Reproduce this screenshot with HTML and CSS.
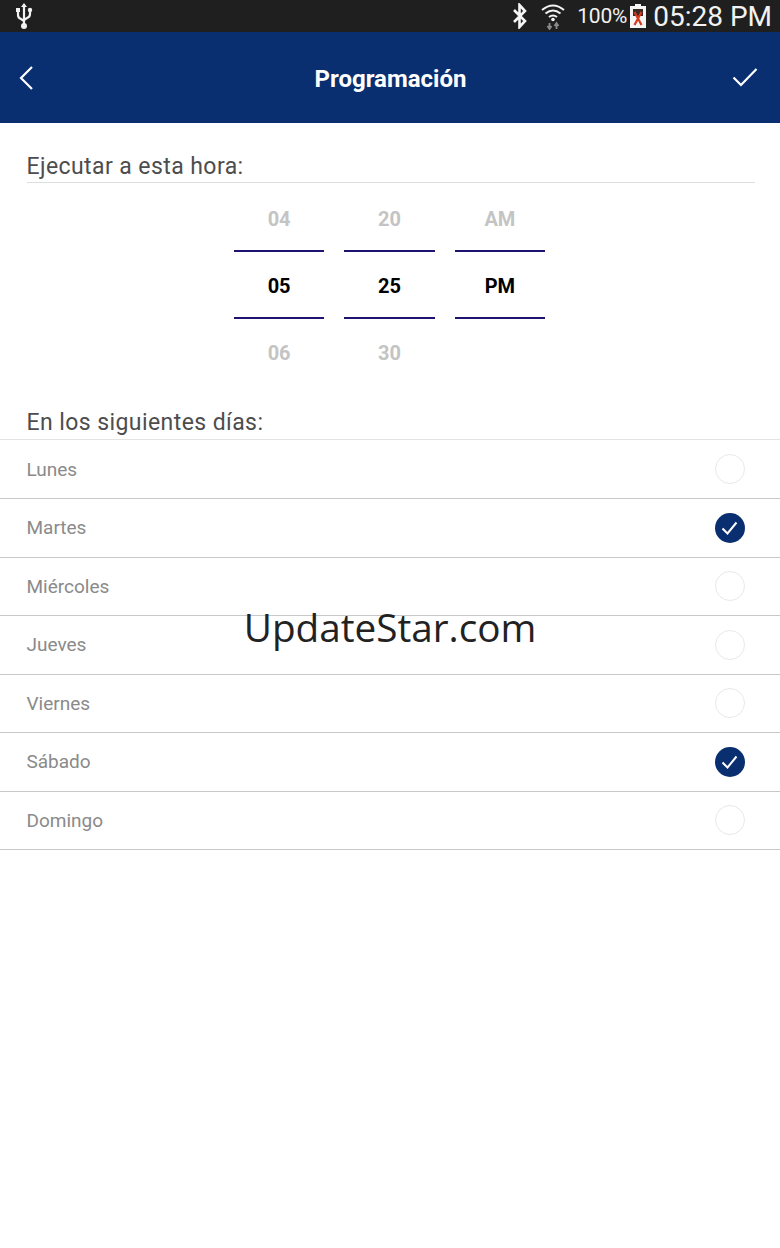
FILE: index.html
```html
<!DOCTYPE html>
<html lang="es">
<head>
<meta charset="utf-8">
<title>Programación</title>
<link rel="stylesheet" href="styles.css">
</head>
<body>
<div class="app">
  <div class="status">
    <svg class="usb" width="20" height="28" viewBox="0 0 20 28"><g fill="none" stroke="#f2f2f2" stroke-width="2.200"><path d="M10 4v20M4 9v4q0 3 3 4l3 2M16 9v3q0 3-3 4l-3 2"/></g><path d="M10 1l3 4H7z" fill="#f2f2f2"/><circle cx="10" cy="24" r="3" fill="#f2f2f2"/><rect x="2" y="6" width="4" height="4" fill="#f2f2f2"/><circle cx="16" cy="8" r="2.200" fill="#f2f2f2"/></svg>
    <div class="status-right">
      <svg class="bt" width="18" height="26" viewBox="0 0 18 26"><path d="M3 7l11 11-5.500 6V2L14 8 3 19" fill="none" stroke="#f5f5f5" stroke-width="2.600"/></svg>
      <svg class="wifi" width="26" height="28" viewBox="0 0 26 28"><g fill="none" stroke="#f2f2f2" stroke-width="2"><path d="M2 8q11-9 22 0"/><path d="M5.500 11.500q7.500-6 15 0"/><path d="M9 15q4-3 8 0"/></g><circle cx="13" cy="17.500" r="1.800" fill="#f2f2f2"/><path d="M9.500 21v6M7.500 24l2 3 2-3M16.500 27v-6M14.500 24l2-3 2 3" fill="none" stroke="#8a8a8a" stroke-width="1.800"/></svg>
      <span class="pct">100%</span>
      <svg class="batt" width="16" height="24" viewBox="0 0 16 24"><path d="M5 0h6v2h5v22H0V2h5z" fill="#f5f5f5"/><rect x="3" y="5" width="10" height="7" fill="#3a2a26"/><path d="M4.500 8l7 13M11.500 8l-7 13" stroke="#d8381c" stroke-width="2.200"/></svg>
      <span class="clock">05:28 PM</span>
    </div>
  </div>
  <header class="bar">
    <svg class="back" width="16" height="26" viewBox="0 0 16 26"><path d="M14 2L3 13l11 11" fill="none" stroke="#fff" stroke-width="2.200"/></svg>
    <h1 class="title">Programación</h1>
    <svg class="ok" width="26" height="20" viewBox="0 0 26 20"><path d="M1.500 9.500L9 17 24.500 1" fill="none" stroke="#fff" stroke-width="2.200"/></svg>
  </header>
  <main>
    <div class="label first">Ejecutar a esta hora:</div>
    <div class="picker">
      <div class="col"><div class="cell">04</div><div class="cell on">05</div><div class="cell">06</div></div>
      <div class="col"><div class="cell">20</div><div class="cell on">25</div><div class="cell">30</div></div>
      <div class="col"><div class="cell">AM</div><div class="cell on">PM</div><div class="cell"></div></div>
    </div>
    <div class="label second">En los siguientes días:</div>
    <ul class="days">
      <li class="day">Lunes<span class="radio"></span></li>
      <li class="day">Martes<span class="radio checked"><svg width="30" height="30" viewBox="0 0 30 30"><path d="M7.500 15.500l5 5 9-11" fill="none" stroke="#fff" stroke-width="2"/></svg></span></li>
      <li class="day">Miércoles<span class="radio"></span></li>
      <li class="day">Jueves<span class="radio"></span></li>
      <li class="day">Viernes<span class="radio"></span></li>
      <li class="day">Sábado<span class="radio checked"><svg width="30" height="30" viewBox="0 0 30 30"><path d="M7.500 15.500l5 5 9-11" fill="none" stroke="#fff" stroke-width="2"/></svg></span></li>
      <li class="day">Domingo<span class="radio"></span></li>
    </ul>
  </main>
  <div class="mark">UpdateStar.com</div>
</div>
</body>
</html>
```
FILE: styles.css
```css
* { box-sizing: border-box; }
html, body { margin: 0; padding: 0; background: #fff; }
.app {
  position: relative;
  width: 780px;
  height: 1248px;
  overflow: hidden;
  font-family: Roboto, "Liberation Sans", sans-serif;
}
.status {
  height: 32px;
  background: #1f1f1f;
  display: flex;
  align-items: center;
  justify-content: space-between;
  padding: 0 8px 0 14px;
}
.status-right { display: flex; align-items: center; color: #f2f2f2; }
.bt { margin-right: 11px; }
.wifi { margin-right: 11px; }
.pct { font-size: 21px; letter-spacing: -0.2px; margin-right: 3px; }
.batt { margin-right: 7px; }
.clock { font-size: 28px; }
.bar {
  height: 91px;
  background: #0a2f70;
  display: grid;
  grid-template-columns: 1fr auto 1fr;
  align-items: center;
  padding: 0 22px 0 18px;
}
.back { justify-self: start; }
.ok { justify-self: end; }
.title {
  margin: 0;
  padding: 2px 0 0 5px;
  font-size: 24px;
  font-weight: 700;
  color: #fff;
}
.label {
  margin-left: 26.500px;
  font-size: 23px;
  line-height: 28px;
  letter-spacing: 0.420px;
  color: #4d4d4d;
}
.first {
  margin-right: 25px;
  padding-top: 30px;
  height: 60px;
  border-bottom: 1px solid #dedede;
}
.second { margin-top: 20px; height: 34px; padding-top: 4px; }
.picker {
  display: flex;
  justify-content: center;
  gap: 19.800px;
  margin-top: 1px;
  padding-right: 1px;
}
.col { width: 90.600px; }
.cell {
  height: 67px;
  padding-top: 2px;
  display: flex;
  align-items: center;
  justify-content: center;
  font-size: 20px;
  font-weight: 700;
  color: #c4c4c4;
}
.cell.on {
  color: #000;
  border-top: 2px solid #1c1470;
  border-bottom: 2px solid #1c1470;
  height: 69px;
  margin: -1px 0;
}
.days { list-style: none; margin: 0; padding: 0.500px 0 0; border-top: 1px solid #e3e3e3; }
.day {
  height: 58.500px;
  padding: 0 35px 0 26.500px;
  display: flex;
  align-items: center;
  justify-content: space-between;
  font-size: 19px;
  color: #8a8a8a;
  border-bottom: 1px solid #c8c8c8;
}
.radio {
  width: 30px;
  height: 30px;
  border-radius: 50%;
  border: 1.500px solid #e8e8e8;
}
.radio.checked {
  background: #0a2f70;
  border: 0;
}
.radio svg { display: block; }
.mark {
  position: absolute;
  left: 0;
  right: 0;
  top: 600px;
  text-align: center;
  font-family: "Open Sans", sans-serif;
  font-size: 38.700px;
  line-height: 54px;
  color: #222;
}
```
